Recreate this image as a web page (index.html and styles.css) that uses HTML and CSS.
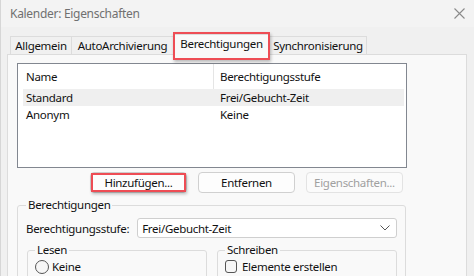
FILE: index.html
```html
<!DOCTYPE html>
<html lang="de">
<head>
<meta charset="utf-8">
<title>Kalender: Eigenschaften</title>
<link rel="stylesheet" href="styles.css">
</head>
<body>
<div class="window">
  <div class="titlebar">
    <span class="title">Kalender: Eigenschaften</span>
    <svg class="close" width="11" height="11" viewBox="0 0 11 11"><path d="M0.5 0.5 L10.5 10.5 M10.5 0.5 L0.5 10.5" stroke="#8a8a8a" stroke-width="1.1" fill="none"/></svg>
  </div>
  <div class="content">
    <div class="tabs">
      <div class="tab t1">Allgemein</div>
      <div class="tab t2">AutoArchivierung</div>
      <div class="tab t3 active">Berechtigungen<span class="mark mark-tab"></span></div>
      <div class="tab t4">Synchronisierung</div>
    </div>
    <div class="panel">
      <div class="list">
        <div class="list-head">
          <div class="col1">Name</div>
          <div class="col2">Berechtigungsstufe</div>
        </div>
        <div class="row selected"><div class="col1">Standard</div><div class="col2">Frei/Gebucht-Zeit</div></div>
        <div class="row"><div class="col1">Anonym</div><div class="col2">Keine</div></div>
      </div>
      <div class="buttons">
        <div class="btn">Hinzufügen...<span class="mark mark-btn"></span></div>
        <div class="btn">Entfernen</div>
        <div class="btn disabled">Eigenschaften...</div>
      </div>
      <fieldset class="group">
        <legend>Berechtigungen</legend>
        <div class="level">
          <span class="level-label">Berechtigungsstufe:</span>
          <div class="select">
            <span>Frei/Gebucht-Zeit</span>
            <svg width="10" height="6" viewBox="0 0 10 6"><path d="M0.5 0.5 L5 5 L9.5 0.5" stroke="#555" stroke-width="1" fill="none"/></svg>
          </div>
        </div>
        <div class="subgroups">
          <fieldset class="sub">
            <legend>Lesen</legend>
            <label class="opt"><span class="radio"></span>Keine</label>
          </fieldset>
          <fieldset class="sub">
            <legend>Schreiben</legend>
            <label class="opt"><span class="check"></span>Elemente erstellen</label>
          </fieldset>
        </div>
      </fieldset>
    </div>
  </div>
</div>
</body>
</html>
```
FILE: styles.css
```css
* { box-sizing: border-box; }
html, body { margin: 0; padding: 0; }
body {
  width: 474px;
  height: 276px;
  overflow: hidden;
  background: #f0f0f0;
  font-family: "Noto Sans", "DejaVu Sans", sans-serif;
  font-size: 11.5px;
  letter-spacing: -0.3px;
  color: #111;
}
.window {
  height: 276px;
  overflow: hidden;
  border-left: 1px solid #d6d6d6;
  background: #f0f0f0;
}
.titlebar {
  height: 27px;
  background: #f3f3f3;
  display: flex;
  align-items: center;
  justify-content: space-between;
  padding: 0 9px 0 9px;
}
.title { color: #707070; font-size: 12px; letter-spacing: -0.3px; }
.close { margin-top: -1px; }
.content { padding: 8px 0 0 6px; }
.tabs {
  display: flex;
  align-items: flex-end;
  padding-left: 3px;
  height: 19px;
  position: relative;
  z-index: 2;
}
.tab {
  height: 18px;
  border: 1px solid #dcdcdc;
  border-bottom: none;
  border-right: none;
  background: #f0f0f0;
  display: flex;
  align-items: center;
  justify-content: center;
  line-height: 1;
  flex: none;
}
.t1 { width: 61px; }
.t2 { width: 102px; }
.t3 { width: 97px; }
.t4 { width: 97px; border-right: 1px solid #dcdcdc; }
.tab.active {
  height: 21px;
  margin-bottom: -1px;
  background: #f9f9f9;
  border-right: 1px solid #dcdcdc;
  padding-bottom: 3px;
  position: relative;
}
.tab.active + .tab { border-left: none; }
.mark {
  position: absolute;
  border: 2px solid #ee4d55;
  box-shadow: 1px 2px 3px rgba(0,0,0,0.25);
  pointer-events: none;
}
.mark-tab { left: -1px; top: -3px; width: 97px; height: 28px; }
.mark-btn { left: 0; top: 0; right: 0; bottom: 0; }
.panel {
  width: 460px;
  height: 224px;
  overflow: hidden;
  background: #f9f9f9;
  border: 1px solid #dcdcdc;
  border-bottom: none;
  padding: 8px 0 0 9px;
}
.list {
  width: 390px;
  height: 105px;
  border: 1px solid #828790;
  background: #fff;
}
.list-head { display: flex; height: 25px; align-items: center; }
.list-head .col1 { border-right: 1px solid #e5e5e5; height: 25px; line-height: 25px; }
.col1 { width: 196px; padding-left: 8px; flex: none; }
.col2 { padding-left: 6px; }
.row { display: flex; height: 17px; align-items: center; margin: 0 2px 0 5px; }
.row .col1 { width: 191px; padding-left: 3px; }
.row.selected { background: #efefef; }
.buttons {
  display: flex;
  gap: 11px;
  margin: 4px 0 0 73px;
}
.btn {
  position: relative;
  width: 97px;
  height: 21px;
  border: 1px solid #d0d0d0;
  border-radius: 4px;
  background: #fdfdfd;
  display: flex;
  align-items: center;
  justify-content: center;
}
.btn.disabled { color: #a0a0a0; border-color: #e3e3e3; background: #fbfbfb; }
.group {
  margin: 5px 0 0 0;
  width: 389px;
  height: 100px;
  border: 1px solid #dcdcdc;
  border-radius: 3px;
  padding: 6px 8px 0 8px;
}
legend { padding: 0 2px; margin-left: 0; line-height: 14px; }
.level { display: flex; align-items: center; gap: 8px; }
.select {
  width: 260px;
  height: 20px;
  border: 1px solid #cfcfcf;
  border-radius: 3px;
  background: #fff;
  display: flex;
  align-items: center;
  justify-content: space-between;
  padding: 0 6px 0 4px;
}
.subgroups { display: flex; gap: 10px; margin-top: 5px; padding-left: 1px; }
.sub {
  margin: 0;
  width: 180px;
  height: 50px;
  border: 1px solid #dcdcdc;
  border-radius: 3px;
  padding: 2px 7px 0 7px;
}
.opt { display: flex; align-items: center; gap: 3px; }
.radio {
  width: 14px; height: 14px;
  border: 1px solid #555;
  border-radius: 50%;
  background: #f6f6f6;
}
.check {
  width: 12px; height: 13px;
  border: 1px solid #555;
  border-radius: 3px;
  background: #f6f6f6;
  margin-right: 2px;
}
```
